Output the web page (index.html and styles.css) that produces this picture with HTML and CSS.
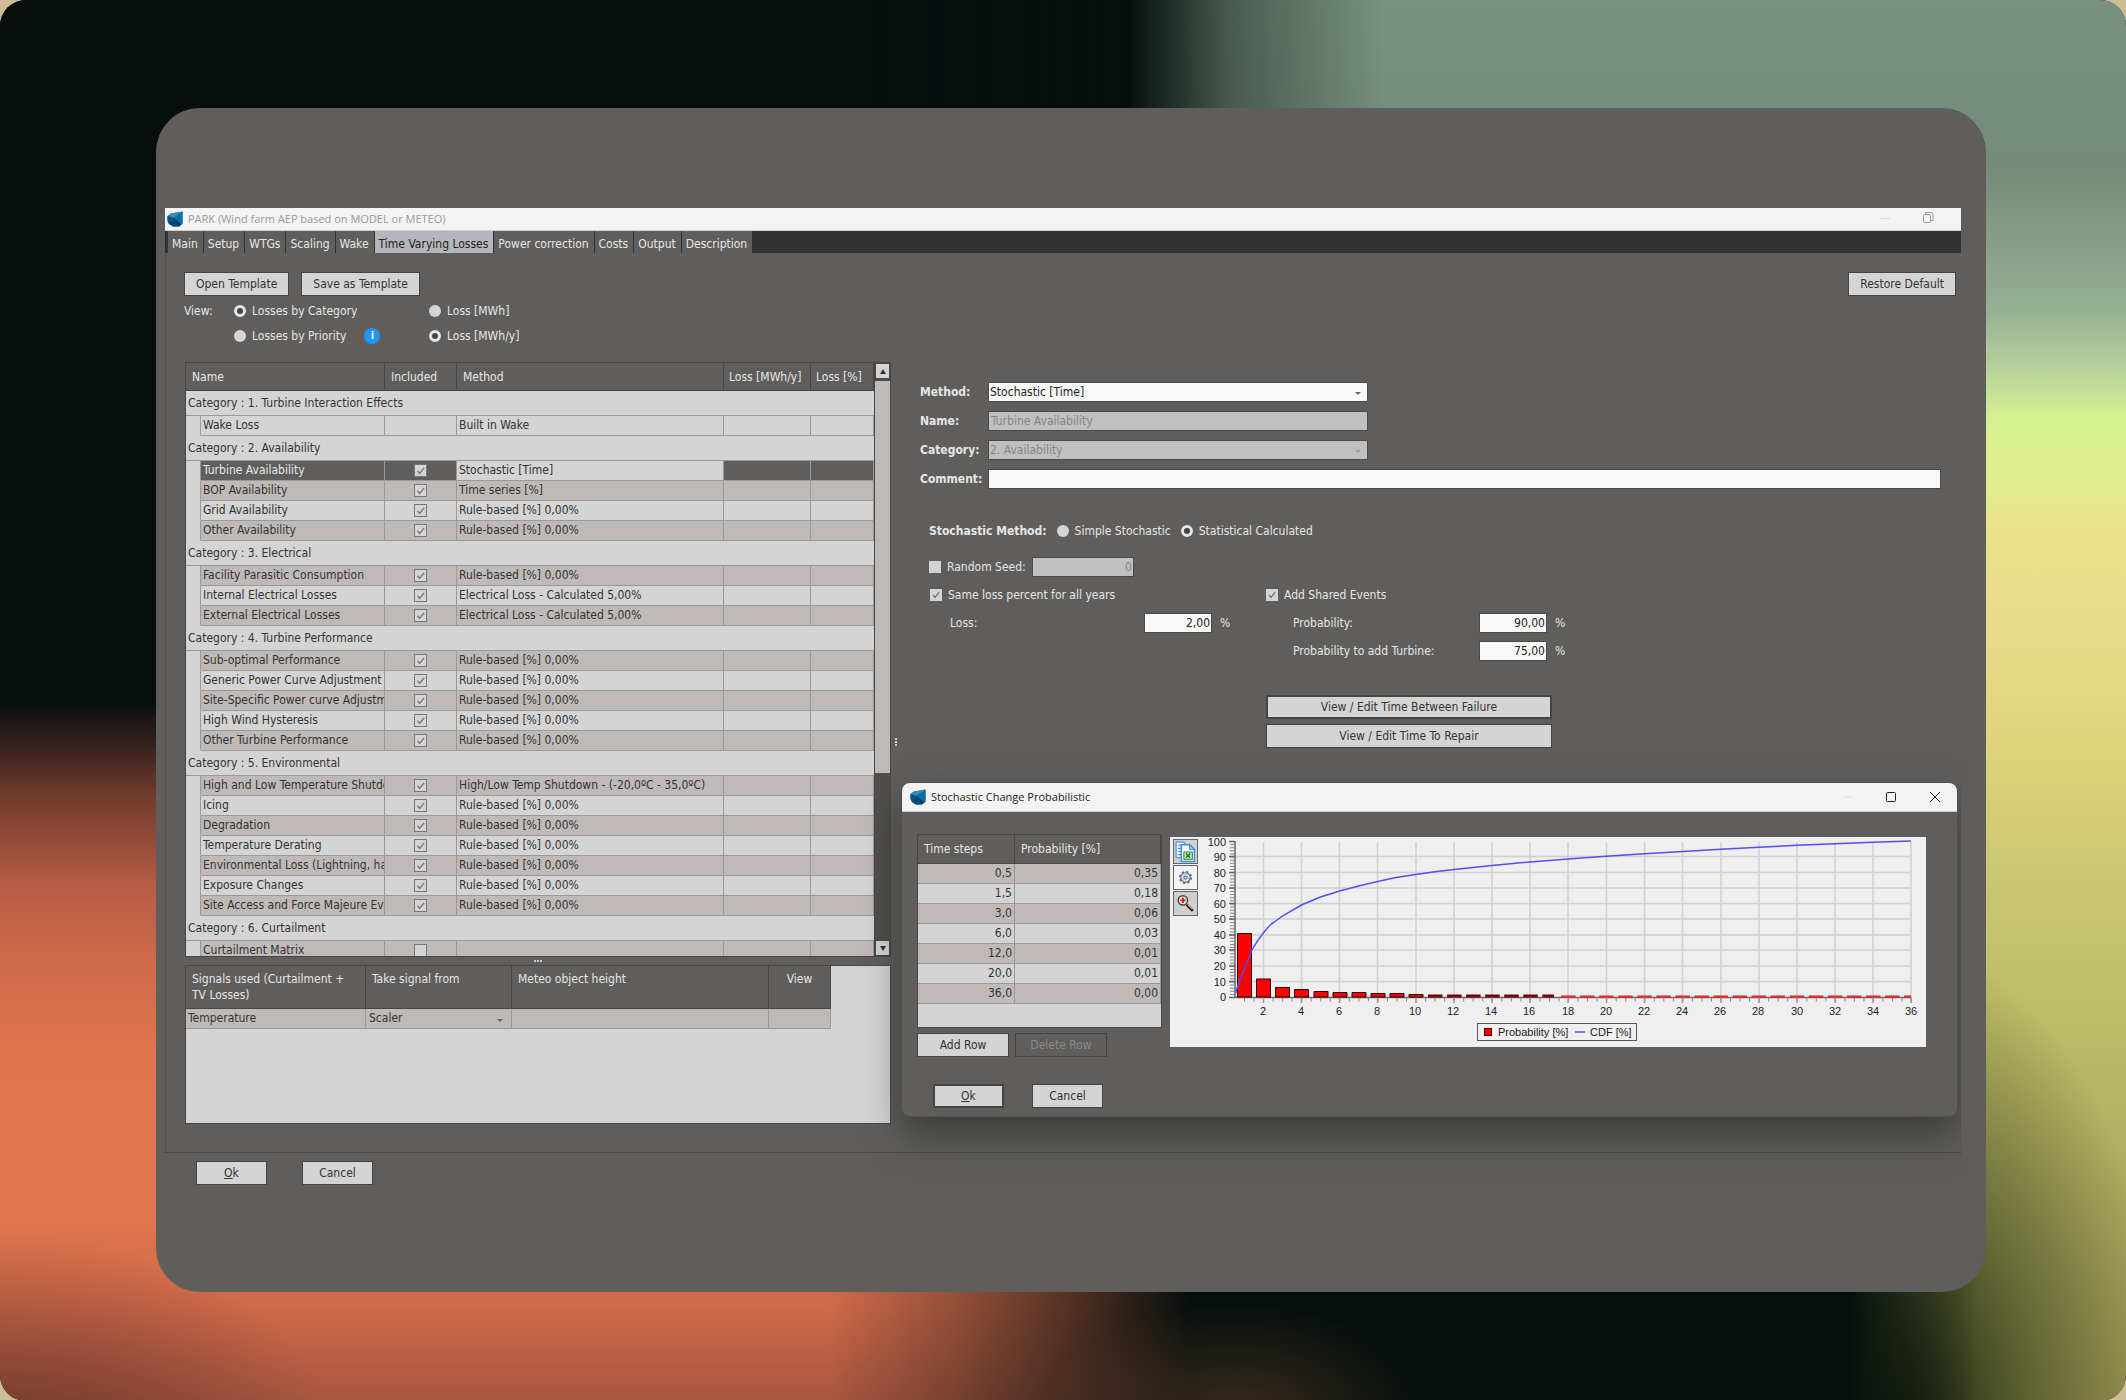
FILE: index.html
```html
<!DOCTYPE html>
<html lang="en">
<head>
<meta charset="utf-8">
<title>PARK (Wind farm AEP based on MODEL or METEO)</title>
<link rel="stylesheet" href="styles.css">
</head>
<body>
<svg class="defs" aria-hidden="true">
  <symbol id="logo" viewBox="0 0 16 16">
    <path d="M4 2.500 15.500 0.500V13L12 15.500H6L2 13 0.500 10V5z" fill="#0e6299"/>
    <path d="M4 2.500 15.500 0.500 6.500 7 0.500 5z" fill="#2f8dbd"/>
    <path d="M15.500 0.500V13L6.500 7z" fill="#0f6ea8"/>
    <path d="M0.500 5 6.500 7 2 13 0.500 10z" fill="#15507c"/>
    <path d="M6.500 7 12 15.500H6L2 13z" fill="#0a4a78"/>
    <path d="M6.500 7 14 13.800 12 15.500z" fill="#06304f"/>
  </symbol>
</svg>
<main class="backdrop">
<div class="panel">
<section class="window">
  <header class="titlebar">
    <svg class="logo" aria-hidden="true"><use href="#logo"/></svg>
    <h1 class="title muted">PARK (Wind farm AEP based on MODEL or METEO)</h1>
    <svg class="winctl" viewBox="0 0 90 22" aria-hidden="true">
      <path d="M9 10.500h10" stroke="#dcdcdc" fill="none"/>
      <rect x="52.500" y="6.500" width="7" height="8" rx="1" stroke="#999" fill="none"/>
      <path d="M54.500 6V4.500h5.500a2 2 0 0 1 2 2v6h-2" stroke="#999" fill="none"/>
    </svg>
  </header>
  <nav class="tabs">
    <button class="tab">Main</button><button class="tab">Setup</button><button class="tab">WTGs</button><button class="tab">Scaling</button><button class="tab">Wake</button><button class="tab active">Time Varying Losses</button><button class="tab">Power correction</button><button class="tab">Costs</button><button class="tab">Output</button><button class="tab">Description</button>
  </nav>
  <div class="content">
    <div class="toolbar">
      <button class="btn">Open Template</button>
      <button class="btn">Save as Template</button>
      <button class="btn restore">Restore Default</button>
    </div>
    <div class="view-options">
      <span>View:</span>
      <label class="choice"><input type="radio" name="view" checked>Losses by Category</label>
      <label class="choice"><input type="radio" name="unit">Loss [MWh]</label>
      <span></span>
      <span class="with-info"><label class="choice"><input type="radio" name="view">Losses by Priority</label><span class="info">i</span></span>
      <label class="choice"><input type="radio" name="unit" checked>Loss [MWh/y]</label>
    </div>

    <div class="split">
      <div class="left">
        <div class="losses">
          <table class="grid">
            <colgroup><col class="c-indent"><col class="c-name"><col class="c-inc"><col class="c-method"><col class="c-loss"><col class="c-pct"></colgroup>
            <thead><tr><th colspan="2">Name</th><th>Included</th><th>Method</th><th>Loss [MWh/y]</th><th>Loss [%]</th></tr></thead>
            <tbody>
            <tr class="cat"><td colspan="6">Category : 1. Turbine Interaction Effects</td></tr>
            <tr><td></td><td>Wake Loss</td><td></td><td>Built in Wake</td><td></td><td></td></tr>
            <tr class="cat"><td colspan="6">Category : 2. Availability</td></tr>
            <tr class="selected"><td></td><td>Turbine Availability</td><td><input type="checkbox" aria-label="Include Turbine Availability" checked></td><td>Stochastic [Time]</td><td></td><td></td></tr>
            <tr class="alt"><td></td><td>BOP Availability</td><td><input type="checkbox" aria-label="Include BOP Availability" checked></td><td>Time series [%]</td><td></td><td></td></tr>
            <tr><td></td><td>Grid Availability</td><td><input type="checkbox" aria-label="Include Grid Availability" checked></td><td>Rule-based [%] 0,00%</td><td></td><td></td></tr>
            <tr class="alt"><td></td><td>Other Availability</td><td><input type="checkbox" aria-label="Include Other Availability" checked></td><td>Rule-based [%] 0,00%</td><td></td><td></td></tr>
            <tr class="cat"><td colspan="6">Category : 3. Electrical</td></tr>
            <tr class="alt"><td></td><td>Facility Parasitic Consumption</td><td><input type="checkbox" aria-label="Include Facility Parasitic Consumption" checked></td><td>Rule-based [%] 0,00%</td><td></td><td></td></tr>
            <tr><td></td><td>Internal Electrical Losses</td><td><input type="checkbox" aria-label="Include Internal Electrical Losses" checked></td><td>Electrical Loss - Calculated 5,00%</td><td></td><td></td></tr>
            <tr class="alt"><td></td><td>External Electrical Losses</td><td><input type="checkbox" aria-label="Include External Electrical Losses" checked></td><td>Electrical Loss - Calculated 5,00%</td><td></td><td></td></tr>
            <tr class="cat"><td colspan="6">Category : 4. Turbine Performance</td></tr>
            <tr class="alt"><td></td><td>Sub-optimal Performance</td><td><input type="checkbox" aria-label="Include Sub-optimal Performance" checked></td><td>Rule-based [%] 0,00%</td><td></td><td></td></tr>
            <tr><td></td><td>Generic Power Curve Adjustment</td><td><input type="checkbox" aria-label="Include Generic Power Curve Adjustment" checked></td><td>Rule-based [%] 0,00%</td><td></td><td></td></tr>
            <tr class="alt"><td></td><td>Site-Specific Power curve Adjustment</td><td><input type="checkbox" aria-label="Include Site-Specific Power curve Adjustment" checked></td><td>Rule-based [%] 0,00%</td><td></td><td></td></tr>
            <tr><td></td><td>High Wind Hysteresis</td><td><input type="checkbox" aria-label="Include High Wind Hysteresis" checked></td><td>Rule-based [%] 0,00%</td><td></td><td></td></tr>
            <tr class="alt"><td></td><td>Other Turbine Performance</td><td><input type="checkbox" aria-label="Include Other Turbine Performance" checked></td><td>Rule-based [%] 0,00%</td><td></td><td></td></tr>
            <tr class="cat"><td colspan="6">Category : 5. Environmental</td></tr>
            <tr class="alt"><td></td><td>High and Low Temperature Shutdown</td><td><input type="checkbox" aria-label="Include High and Low Temperature Shutdown" checked></td><td>High/Low Temp Shutdown - (-20,0ºC - 35,0ºC)</td><td></td><td></td></tr>
            <tr><td></td><td>Icing</td><td><input type="checkbox" aria-label="Include Icing" checked></td><td>Rule-based [%] 0,00%</td><td></td><td></td></tr>
            <tr class="alt"><td></td><td>Degradation</td><td><input type="checkbox" aria-label="Include Degradation" checked></td><td>Rule-based [%] 0,00%</td><td></td><td></td></tr>
            <tr><td></td><td>Temperature Derating</td><td><input type="checkbox" aria-label="Include Temperature Derating" checked></td><td>Rule-based [%] 0,00%</td><td></td><td></td></tr>
            <tr class="alt"><td></td><td>Environmental Loss (Lightning, hail)</td><td><input type="checkbox" aria-label="Include Environmental Loss" checked></td><td>Rule-based [%] 0,00%</td><td></td><td></td></tr>
            <tr><td></td><td>Exposure Changes</td><td><input type="checkbox" aria-label="Include Exposure Changes" checked></td><td>Rule-based [%] 0,00%</td><td></td><td></td></tr>
            <tr class="alt"><td></td><td>Site Access and Force Majeure Events</td><td><input type="checkbox" aria-label="Include Site Access and Force Majeure Events" checked></td><td>Rule-based [%] 0,00%</td><td></td><td></td></tr>
            <tr class="cat"><td colspan="6">Category : 6. Curtailment</td></tr>
            <tr class="alt"><td></td><td>Curtailment Matrix</td><td><input type="checkbox" aria-label="Include Curtailment Matrix"></td><td></td><td></td><td></td></tr>
            </tbody>
          </table>
          <div class="scrollbar">
            <button class="up" aria-label="Scroll up"></button>
            <div class="thumb"></div>
            <button class="down" aria-label="Scroll down"></button>
          </div>
        </div>
        <div class="grip-h"><i></i><i></i><i></i></div>
        <div class="signals">
          <table class="grid signal-grid">
            <colgroup><col class="s-name"><col class="s-from"><col class="s-height"><col class="s-view"></colgroup>
            <thead><tr><th>Signals used (Curtailment + TV Losses)</th><th>Take signal from</th><th>Meteo object height</th><th class="center">View</th></tr></thead>
            <tbody><tr class="alt"><td>Temperature</td><td><span class="dropdown"><select aria-label="Take signal from"><option>Scaler</option></select></span></td><td></td><td></td></tr></tbody>
          </table>
        </div>
      </div>
      <div class="grip-v"><i></i><i></i><i></i></div>
      <div class="right">
        <div class="fields">
          <label for="method">Method:</label>
          <span class="dropdown field"><select id="method"><option>Stochastic [Time]</option></select></span>
          <label for="name">Name:</label>
          <input class="field" id="name" value="Turbine Availability" disabled>
          <label for="category">Category:</label>
          <span class="dropdown field off"><select id="category" disabled><option>2. Availability</option></select></span>
          <label for="comment">Comment:</label>
          <input id="comment">
        </div>
        <div class="method-row">
          <strong>Stochastic Method:</strong>
          <label class="choice"><input type="radio" name="stoch">Simple Stochastic</label>
          <label class="choice"><input type="radio" name="stoch" checked>Statistical Calculated</label>
        </div>
        <div class="seed-row">
          <label class="choice"><input type="checkbox">Random Seed:</label>
          <input class="seed num" value="0" aria-label="Random seed value" disabled>
        </div>
        <div class="settings">
          <div class="rows">
            <label class="choice"><input type="checkbox" checked>Same loss percent for all years</label>
            <div class="value-row loss"><label for="loss">Loss:</label><input class="num" id="loss" value="2,00"><span>%</span></div>
          </div>
          <div class="rows">
            <label class="choice"><input type="checkbox" checked>Add Shared Events</label>
            <div class="value-row"><label for="prob">Probability:</label><input class="num" id="prob" value="90,00"><span>%</span></div>
            <div class="value-row"><label for="prob-add">Probability to add Turbine:</label><input class="num" id="prob-add" value="75,00"><span>%</span></div>
            <div class="edit-buttons">
              <button class="btn focus">View / Edit Time Between Failure</button>
              <button class="btn">View / Edit Time To Repair</button>
            </div>
          </div>
        </div>
      </div>
    </div>
  </div>
  <footer class="actions">
    <button class="btn small"><u>O</u>k</button>
    <button class="btn small">Cancel</button>
  </footer>

  <section class="dialog" role="dialog" aria-labelledby="dialog-title">
    <header class="titlebar dialog-bar">
      <svg class="logo" aria-hidden="true"><use href="#logo"/></svg>
      <h2 class="title" id="dialog-title">Stochastic Change Probabilistic</h2>
      <svg class="winctl" viewBox="0 0 126 28" aria-hidden="true">
        <path d="M12 14h10" stroke="#dcdcdc" fill="none"/>
        <rect x="55.500" y="9.500" width="9" height="9" rx="1" stroke="#222" fill="none"/>
        <path d="M99 9l10 10M109 9l-10 10" stroke="#222" fill="none"/>
      </svg>
    </header>
    <div class="dialog-body">
      <div class="steps">
        <div class="steps-box">
          <table class="grid step-grid">
            <colgroup><col class="t-step"><col></colgroup>
            <thead><tr><th>Time steps</th><th>Probability [%]</th></tr></thead>
            <tbody>
            <tr class="alt"><td>0,5</td><td>0,35</td></tr>
            <tr><td>1,5</td><td>0,18</td></tr>
            <tr class="alt"><td>3,0</td><td>0,06</td></tr>
            <tr><td>6,0</td><td>0,03</td></tr>
            <tr class="alt"><td>12,0</td><td>0,01</td></tr>
            <tr><td>20,0</td><td>0,01</td></tr>
            <tr class="alt"><td>36,0</td><td>0,00</td></tr>
            </tbody>
          </table>
        </div>
        <div class="row-buttons">
          <button class="btn">Add Row</button>
          <button class="btn" disabled>Delete Row</button>
        </div>
      </div>
      <div class="chart">
        <div class="chart-tools">
          <button aria-label="Copy to spreadsheet"><svg viewBox="0 0 22 22">
            <path d="M2 2h7l3 3v12H2z" fill="#eaf3ff" stroke="#3d7edb"/><path d="M4 5h3M4 8h4M4 11h4M4 14h4" stroke="#3d7edb"/>
            <path d="M7 4.500h8l4.500 4.500v11.500H7z" fill="#f3f9ff" stroke="#3d8fe8" stroke-width="1.400"/><path d="M15 4.500v4.500h4.500z" fill="#9ccbff" stroke="#3d8fe8"/>
            <rect x="9.500" y="11.500" width="8" height="7" fill="#d9f0d0" stroke="#2f8a2f"/><path d="M11.500 13l4 4M15.500 13l-4 4" stroke="#1f7a1f" stroke-width="1.500"/>
          </svg></button>
          <button class="light" aria-label="Chart settings"><svg viewBox="0 0 22 22">
            <circle cx="11" cy="11" r="4.500" fill="#d4dbe8" stroke="#5a6a8c"/><circle cx="11" cy="11" r="5.500" fill="none" stroke="#5a6a8c" stroke-width="1.600" stroke-dasharray="2.200 2.120"/><circle cx="11" cy="11" r="1.500" fill="#fff" stroke="#5a6a8c"/>
          </svg></button>
          <button aria-label="Zoom"><svg viewBox="0 0 22 22">
            <path d="M12 12l6 6" stroke="#111" stroke-width="2.400"/><path d="M13 12l4.500 4.500" stroke="#e3c02a"/>
            <circle cx="8.500" cy="8" r="4.500" fill="#e9e4e4" stroke="#444" stroke-width="1.400"/><path d="M8.500 5.500v5M6 8h5" stroke="#e01818" stroke-width="1.800"/>
          </svg></button>
        </div>
        <svg class="plot" viewBox="0 0 728 210" role="img" aria-label="Probability and CDF by time step">
          <path class="gridline" d="M37 144.500h676M37 129h676M37 113h676M37 98h676M37 82h676M37 66.500h676M37 51h676M37 35.500h676M37 19.500h676M65.500 5v155M103.500 5v155M141.500 5v155M179.500 5v155M218 5v155M256 5v155M294 5v155M332 5v155M370 5v155M408.500 5v155M446.500 5v155M484.500 5v155M523 5v155M561 5v155M599 5v155M637 5v155M675 5v155M713 5v155"/>
          <path class="minor" d="M34 4v156" stroke-dasharray="1 2.120"/>
          <path class="axis" d="M37 4v156.500h676M31 4.500h6M31 19.500h6M31 35.500h6M31 51h6M31 66.500h6M31 82h6M31 98h6M31 113h6M31 129h6M31 144.500h6M31 160.500h6"/>
          <path class="minor" d="M46 162.500h668" stroke-dasharray="1 8.530"/>
          <path class="axis thin" d="M65.500 160v6M103.500 160v6M141.500 160v6M179.500 160v6M218 160v6M256 160v6M294 160v6M332 160v6M370 160v6M408.500 160v6M446.500 160v6M484.500 160v6M523 160v6M561 160v6M599 160v6M637 160v6M675 160v6M713 160v6"/>
          <path class="bars" d="M39.500 160V96.500h14V160zM58.500 160V142h14V160zM77.500 160V150.500h14V160zM96.500 160V152.500h14V160zM116 160V154.500h14V160zM135 160V155.500h14V160zM154 160V155.500h14V160zM173 160V156.500h14V160zM192 160V156.500h14V160zM211 160V157.500h14V160z"/>
          <path class="tiny" d="M230 159h126" stroke-dasharray="14.500 4.560"/>
          <path class="flat" d="M363 159.500h350" stroke-dasharray="14.500 4.560"/>
          <path class="cdf" d="M37.500 156Q41 144 46.300 132L53.900 113Q59 104 65.300 96T74.800 86 84.400 79L103.400 68 122.500 60 141.600 54 160.600 49 179.700 44.500 198 40.500 217.800 37.500 237 34.800 256 32.500 294 28.500 332 25 370 22 408 19.300 446.500 16.800 485 14.500 523 12.300 561 10.300 599 8.300 637 6.700 675 5.200 713 4"/>
          <g class="ylab"><text x="28" y="9">100</text><text x="28" y="24">90</text><text x="28" y="40">80</text><text x="28" y="55">70</text><text x="28" y="71">60</text><text x="28" y="86">50</text><text x="28" y="102">40</text><text x="28" y="117">30</text><text x="28" y="133">20</text><text x="28" y="149">10</text><text x="28" y="164">0</text></g>
          <g class="xlab"><text x="65" y="178">2</text><text x="103" y="178">4</text><text x="141" y="178">6</text><text x="179" y="178">8</text><text x="217" y="178">10</text><text x="255" y="178">12</text><text x="293" y="178">14</text><text x="331" y="178">16</text><text x="370" y="178">18</text><text x="408" y="178">20</text><text x="446" y="178">22</text><text x="484" y="178">24</text><text x="522" y="178">26</text><text x="560" y="178">28</text><text x="599" y="178">30</text><text x="637" y="178">32</text><text x="675" y="178">34</text><text x="713" y="178">36</text></g>
          <rect x="279.500" y="186.500" width="159" height="17" fill="none" stroke="#555"/>
          <rect x="286.500" y="191.500" width="7" height="7" fill="#f00" stroke="#400"/>
          <text x="300" y="199">Probability [%]</text>
          <path class="cdf" d="M377 195h10"/>
          <text x="392" y="199">CDF [%]</text>
        </svg>
      </div>
    </div>
    <footer class="dialog-actions">
      <button class="btn small focus"><u>O</u>k</button>
      <button class="btn small">Cancel</button>
    </footer>
  </section>
</section>
</div>
</main>
</body>
</html>
```

FILE: styles.css
```css
:root {
  --bg: #5f5e5c;
  --line: #484745;
  --light: #d4d4d4;
  --alt: #bfbab7;
  --ink: #333;
  --text: #e6e6e6;
}
* { box-sizing: border-box; }
body {
  margin: 0;
  background: #cdbd94;
  font: 12px/16px "DejaVu Sans Condensed", "DejaVu Sans", sans-serif;
  color: var(--text);
}
button, input, select { font: inherit; color: inherit; margin: 0; }
.defs { position: absolute; width: 0; height: 0; }

/* Backdrop artwork */
.backdrop {
  position: relative;
  isolation: isolate;
  overflow: hidden;
  min-height: 100vh;
  padding: 108px 140px 109px 156px;
  border-radius: 26px;
  background: radial-gradient(ellipse 9% 8% at 58% 101%, #3a2c20, transparent), #070f0d;
}
.backdrop::before, .backdrop::after { content: ""; position: absolute; inset: 0; z-index: -1; }
.backdrop::before {
  background:
    radial-gradient(ellipse 16% 16% at 0 104%, rgba(90, 45, 38, .75), transparent),
    linear-gradient(#070f0d 50%, #33201f 53%, #743c2d 57%, #b45b43 63%, #cc694a 68%, #dd744e 74%, #e1774f 80%, #e0764f 87%, #cf6a4a 93%, #a8563f 100%);
  -webkit-mask-image: linear-gradient(to right, #000 39%, rgba(0, 0, 0, .7) 45%, rgba(0, 0, 0, .4) 50%, rgba(0, 0, 0, .2) 53%, transparent 56%);
  mask-image: linear-gradient(to right, #000 39%, rgba(0, 0, 0, .7) 45%, rgba(0, 0, 0, .4) 50%, rgba(0, 0, 0, .2) 53%, transparent 56%);
}
.backdrop::after {
  background:
    radial-gradient(ellipse 12% 34% at 90% 102%, #1c2410, rgba(70, 78, 36, .75) 45%, transparent),
    linear-gradient(#789281 0, #748b7b 12%, #8aa189 18%, #95b092 22%, #b4cf9c 26%, #d6f290 30%, #e4ec90 35%, #eae08a 38%, #e8db88 46%, #ddd37a 54%, #cdc772 62%, #c0bf68 70%, #b4b262 80%, #a8a55e 90%, #a09a56 100%);
  -webkit-mask: linear-gradient(to right, transparent 53%, rgba(0, 0, 0, .6) 58%, #000 65%) top / 100% 32% no-repeat, linear-gradient(to right, transparent 87%, #000 93%) bottom / 100% 70% no-repeat;
  mask: linear-gradient(to right, transparent 53%, rgba(0, 0, 0, .6) 58%, #000 65%) top / 100% 32% no-repeat, linear-gradient(to right, transparent 87%, #000 93%) bottom / 100% 70% no-repeat;
}
.panel { padding: 100px 25px 99px 9px; border-radius: 44px; background: var(--bg); }

/* Window frame */
.window { position: relative; overflow: hidden; }
.titlebar {
  display: flex;
  align-items: center;
  gap: 5px;
  height: 23px;
  padding-left: 2px;
  background: #f3f3f3;
  border-bottom: 1px solid #cfcfcf;
}
.logo { width: 16px; height: 16px; flex: none; }
.title { margin: 0; font: 11px/16px "Open Sans", sans-serif; color: #222; }
.title.muted { color: #999; }
.winctl { width: 90px; height: 22px; margin-left: auto; }
.tabs { display: flex; gap: 1px; height: 22px; padding-left: 3px; background: #323232; }
.tab { padding: 4px 5px 1px 4px; border: 0; background: var(--bg); }
.tab.active { background: #b3b7bb; color: #222; }
.content { padding: 19px 5px 28px 18px; border-left: 1px solid #504f4d; border-bottom: 1px solid var(--line); }

/* Controls */
.btn {
  height: 24px;
  padding: 0 11px;
  border: 1px solid #454442;
  background: var(--light);
  color: var(--ink);
}
.btn:disabled { background: transparent; color: #8b8a88; }
.btn.small { width: 71px; }
.btn.focus { border-width: 2px; }
.toolbar { display: flex; gap: 12px; }
.restore { margin-left: auto; }
.choice { display: inline-flex; align-items: center; gap: 6px; }
input[type="radio"], input[type="checkbox"] { appearance: none; flex: none; width: 12px; height: 12px; background: var(--light); }
input[type="radio"] { border-radius: 50%; }
input[type="radio"]:checked { background: #444; border: 3px solid #e4e4e4; }
input[type="checkbox"]:checked {
  background: var(--light) url("data:image/svg+xml,%3Csvg xmlns='http://www.w3.org/2000/svg' viewBox='0 0 12 12'%3E%3Cpath d='M3 6l2 2.500L9.200 3.200' fill='none' stroke='%23777' stroke-width='1.300'/%3E%3C/svg%3E") center / 12px no-repeat;
}
.view-options { display: grid; grid-template-columns: 50px 195px auto; justify-content: start; row-gap: 9px; margin-top: 7px; }
.with-info { display: flex; gap: 18px; }
.info { width: 16px; height: 16px; border-radius: 50%; background: #2196f3; color: #fff; text-align: center; font-size: 10px; font-weight: bold; }
.dropdown { position: relative; display: block; }
.dropdown::after {
  content: "";
  position: absolute;
  right: 6px;
  top: 50%;
  border: 3px solid transparent;
  border-top-color: #666;
  border-bottom: 0;
}
.off::after { border-top-color: #999; }
.dropdown select { display: block; width: 100%; height: 20px; border: 0; padding: 0 2px; appearance: none; background: none; }
.grid .dropdown select { height: 19px; padding: 0 1px; }

/* Grids */
.split { display: flex; margin: 18px 0 0 1px; }
.left { flex: 0 0 706px; }
.grid { table-layout: fixed; border-collapse: separate; border-spacing: 0; color: var(--ink); background: var(--light); }
.grid th {
  height: 28px;
  padding: 0 6px;
  border-right: 1px solid var(--line);
  border-bottom: 1px solid var(--line);
  background: var(--bg);
  color: var(--text);
  font-weight: normal;
  text-align: left;
  white-space: nowrap;
}
.grid td { height: 20px; padding: 0 2px; border-right: 1px solid #999; border-bottom: 1px solid #999; line-height: 19px; white-space: nowrap; overflow: hidden; }
.alt td { background: var(--alt); }
.losses { display: flex; height: 595px; overflow: hidden; border: 1px solid var(--line); }
.losses .grid { width: 688px; flex: none; align-self: flex-start; }
.losses th:nth-child(n + 4) { padding: 0 5px; }
.c-indent { width: 15px; }
.c-name { width: 184px; }
.c-inc { width: 72px; }
.c-method { width: 267px; }
.c-loss { width: 87px; }
.cat td { height: 25px; border-right: 0; line-height: 24px; }
.losses tr:not(.cat) td:first-child { background: var(--light); border-bottom-color: var(--light); }
.losses td:nth-child(3) { text-align: center; }
.losses td input { display: block; margin: 0 auto; width: 13px; height: 13px; border: 1px solid #777; }
.selected td { background: var(--bg); color: var(--text); }
.selected td:nth-child(4) { background: var(--light); color: var(--ink); }
.scrollbar { flex: 1; display: flex; flex-direction: column; background: #504f4d; border-left: 1px solid var(--line); }
.scrollbar button { flex: none; height: 16px; padding: 0; border: 1px solid var(--line); background: var(--light); }
.scrollbar button::before { content: ""; display: block; width: 0; margin: 0 auto; border: 3px solid transparent; }
.scrollbar .up::before { border-top: 0; border-bottom: 5px solid #333; }
.scrollbar .down { margin-top: auto; }
.scrollbar .down::before { border-bottom: 0; border-top: 5px solid #333; }
.thumb { flex: none; height: 392px; margin-top: 2px; background: var(--alt); }
.grip-h, .grip-v { display: flex; justify-content: center; align-items: center; gap: 1px; }
.grip-h { height: 8px; }
.grip-v { flex-direction: column; width: 10px; height: 759px; }
.grip-h i, .grip-v i { width: 2px; height: 2px; background: #ccc; }
.signals { height: 159px; border: 1px solid var(--line); background: var(--light); }
.signal-grid { width: 645px; }
.signal-grid th { height: 43px; padding: 5px 6px 0; vertical-align: top; white-space: normal; }
.grid th.center { text-align: center; }
.s-name { width: 180px; }
.s-from { width: 146px; }
.s-height { width: 257px; }

/* Form */
.right { flex: 1; padding: 20px 15px 0 19px; }
.fields { display: grid; grid-template-columns: 68px 1fr; row-gap: 9px; font-weight: bold; align-items: center; }
.fields input, .fields select { font-weight: normal; }
.right input:not([type]) { height: 20px; padding: 0 2px; border: 1px solid #4c4b49; background: #f8f8f8; color: #222; }
.right .field { width: 380px; }
.right .dropdown { height: 20px; border: 1px solid #4c4b49; background: #f8f8f8; color: #222; }
.right .dropdown select { height: 18px; padding: 0 1px; opacity: 1; }
.right .off, .right input:not([type]):disabled { background: #c0c0c0; color: #858585; }
.method-row { display: flex; gap: 10px; align-items: center; margin: 32px 0 0 9px; height: 20px; }
.seed-row { display: flex; gap: 6px; align-items: center; margin: 16px 0 8px 9px; }
.seed { width: 102px; }
.right input.num { text-align: right; padding: 0 1px; }
.settings { display: grid; grid-template-columns: 336px 1fr; padding-left: 10px; }
.rows { display: grid; row-gap: 8px; align-content: start; justify-items: start; }
.rows > .choice { height: 20px; }
.value-row { display: grid; grid-template-columns: 186px 68px auto; align-items: center; padding-left: 27px; }
.value-row.loss { grid-template-columns: 194px 68px auto; padding-left: 20px; }
.value-row span { padding-left: 8px; }
.edit-buttons { display: grid; gap: 5px; width: 286px; margin-top: 26px; }
.actions { display: flex; gap: 35px; padding: 8px 0 8px 31px; }

/* Dialog */
.dialog {
  position: absolute;
  top: 575px;
  left: 737px;
  right: 4px;
  border-radius: 8px;
  background: var(--bg);
  box-shadow: 0 0 0 1px #504f4d, 0 18px 40px rgba(0, 0, 0, .4);
}
.dialog-bar { height: 29px; padding-left: 8px; border-radius: 8px 8px 0 0; }
.dialog-bar .winctl { width: 126px; height: 28px; }
.dialog-body { display: flex; gap: 8px; padding: 22px 31px 0 15px; }
.steps { flex: 0 0 245px; }
.steps-box { height: 194px; border: 1px solid var(--line); background: var(--light); }
.step-grid { width: 100%; }
.step-grid th { height: 29px; }
.step-grid td { text-align: right; }
.t-step { width: 97px; }
.row-buttons { display: grid; grid-template-columns: 92px 92px; gap: 6px; margin-top: 5px; }
.chart { flex: 1; display: flex; align-self: flex-start; margin-top: 3px; background: #efefef; }
.chart-tools { display: grid; gap: 1px; align-content: start; padding: 2px 0 0 3px; flex: none; }
.chart-tools button { width: 25px; height: 25px; padding: 0; border: 1px solid #666; background: #cfcfcf; }
.chart-tools button.light { background: #f2f2f2; }
.chart-tools svg { display: block; width: 23px; height: 23px; }
.plot { display: block; flex: 1; min-width: 0; font: 11px "Liberation Sans", Arial, sans-serif; fill: #222; }
.plot path { fill: none; }
.gridline { stroke: #d0d0d0; stroke-width: 1.500; }
.axis { stroke: #666; stroke-width: 1.500; }
.thin { stroke: #999; }
.minor { stroke: #888; stroke-width: 4; }
.plot .bars { fill: #f00; stroke: #300; }
.tiny { stroke: #700808; stroke-width: 3; }
.flat { stroke: #e22; stroke-width: 2; }
.cdf { stroke: #5050f4; stroke-width: 1.500; }
.ylab { text-anchor: end; }
.xlab { text-anchor: middle; }
.dialog-actions { display: flex; gap: 28px; padding: 27px 0 8px 31px; }
```
